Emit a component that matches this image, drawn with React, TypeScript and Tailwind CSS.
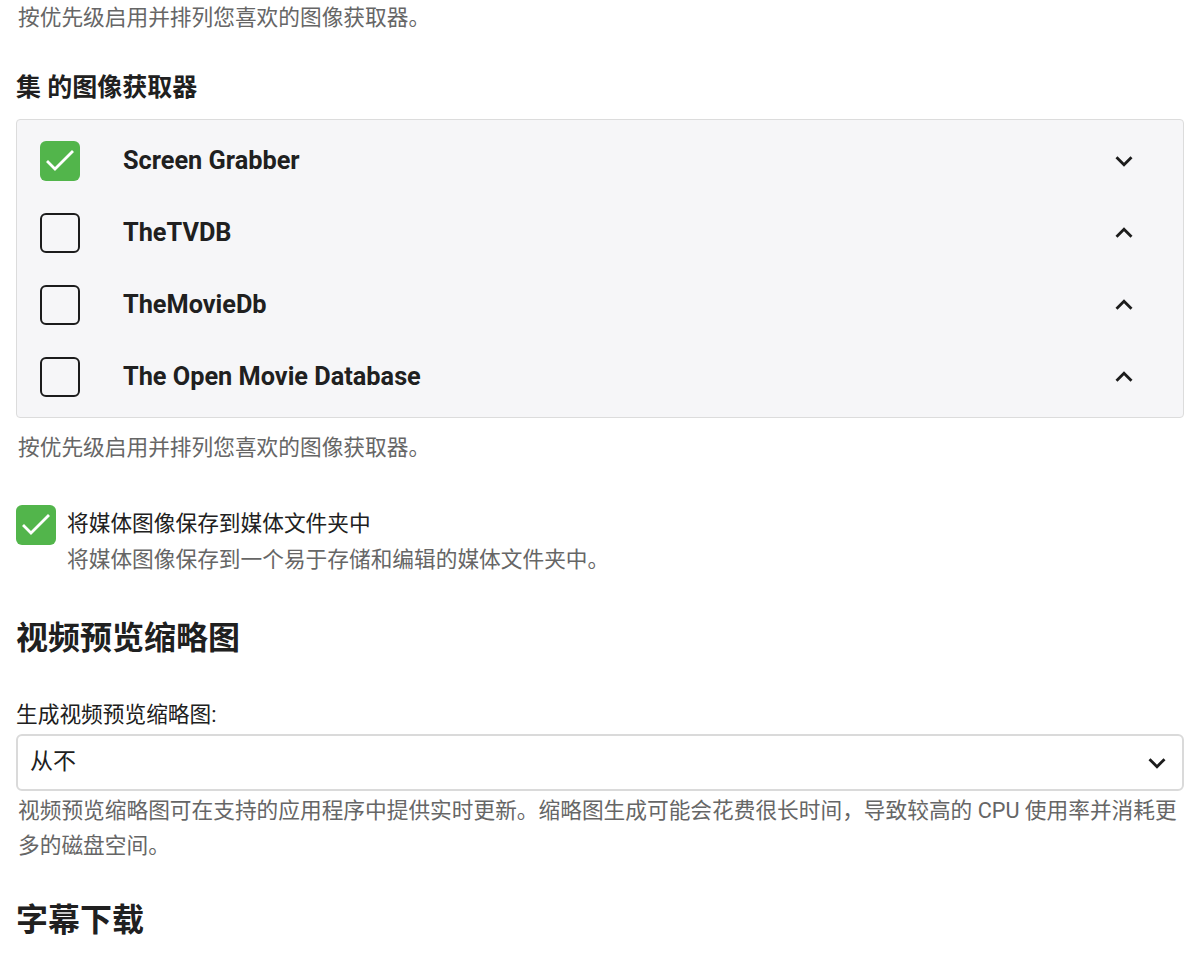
import React from "react";

const font = { fontFamily: 'Roboto, "Noto Sans CJK SC", sans-serif' };

function Check({ checked }: { checked: boolean }) {
  if (checked) {
    return (
      <div className="w-10 h-10 shrink-0 rounded-[6px] bg-[#52b54b] flex items-center justify-center">
        <svg width="40" height="40" viewBox="0 0 40 40" fill="none">
          <polyline points="8,21 15,28 32,11" stroke="#fff" strokeWidth="2.8" strokeLinecap="square" />
        </svg>
      </div>
    );
  }
  return <div className="w-10 h-10 shrink-0 rounded-[6px] border-[2.5px] border-[#1c1c1c]" />;
}

function Chevron({ up }: { up?: boolean }) {
  return (
    <svg width="34" height="34" viewBox="0 0 24 24" fill="#1c1c1c">
      {up ? (
        <path d="M7.41 15.41 12 10.83l4.59 4.58L18 14l-6-6-6 6z" />
      ) : (
        <path d="M16.59 8.59 12 13.17 7.41 8.59 6 10l6 6 6-6z" />
      )}
    </svg>
  );
}

const fetchers = [
  { name: "Screen Grabber", on: true },
  { name: "TheTVDB", on: false },
  { name: "TheMovieDb", on: false },
  { name: "The Open Movie Database", on: false },
];

export default function App() {
  return (
    <div className="min-h-screen bg-white pl-4 pr-[18px] text-[#202020]" style={font}>
      <p className="text-[21.7px] leading-[35px] text-[#666] pl-[2px]">按优先级启用并排列您喜欢的图像获取器。</p>

      <h3 className="mt-[37px] text-[25px] leading-[32px] font-bold">集 的图像获取器</h3>

      <div className="mt-[15px] border border-[#dcdcdc] rounded-[4px] bg-[#f6f6f8] pt-[5px] pb-[4px]">
        {fetchers.map((f) => (
          <div key={f.name} className="h-[72px] flex items-center pl-[23px] pr-[42px]">
            <Check checked={f.on} />
            <span className="ml-[43px] flex-1 text-[25.3px] font-bold">{f.name}</span>
            <Chevron up={!f.on} />
          </div>
        ))}
      </div>

      <p className="mt-[12px] text-[21.7px] leading-[35px] text-[#666] pl-[2px]">按优先级启用并排列您喜欢的图像获取器。</p>

      <div className="mt-[40px] flex items-start">
        <Check checked />
        <div className="ml-[11px] pt-[1px]">
          <div className="text-[21.7px] leading-[36px]">将媒体图像保存到媒体文件夹中</div>
          <div className="text-[21.7px] leading-[36px] text-[#666]">将媒体图像保存到一个易于存储和编辑的媒体文件夹中。</div>
        </div>
      </div>

      <h2 className="mt-[40px] text-[32px] leading-[40px] font-bold">视频预览缩略图</h2>

      <label className="block mt-[39px] text-[21.7px] leading-[35px]">生成视频预览缩略图:</label>
      <div className="mt-[2px] h-[57px] border-2 border-[#dadada] rounded-[6px] flex items-center pl-[12px] pr-[8px]">
        <span className="flex-1 text-[23px]">从不</span>
        <Chevron />
      </div>
      <p className="mt-[2px] text-[21.7px] leading-[35px] text-[#666] pl-[2px]">
        视频预览缩略图可在支持的应用程序中提供实时更新。缩略图生成可能会花费很长时间，导致较高的 CPU 使用率并消耗更多的磁盘空间。
      </p>

      <h2 className="mt-[37px] text-[32px] leading-[40px] font-bold">字幕下载</h2>
    </div>
  );
}
